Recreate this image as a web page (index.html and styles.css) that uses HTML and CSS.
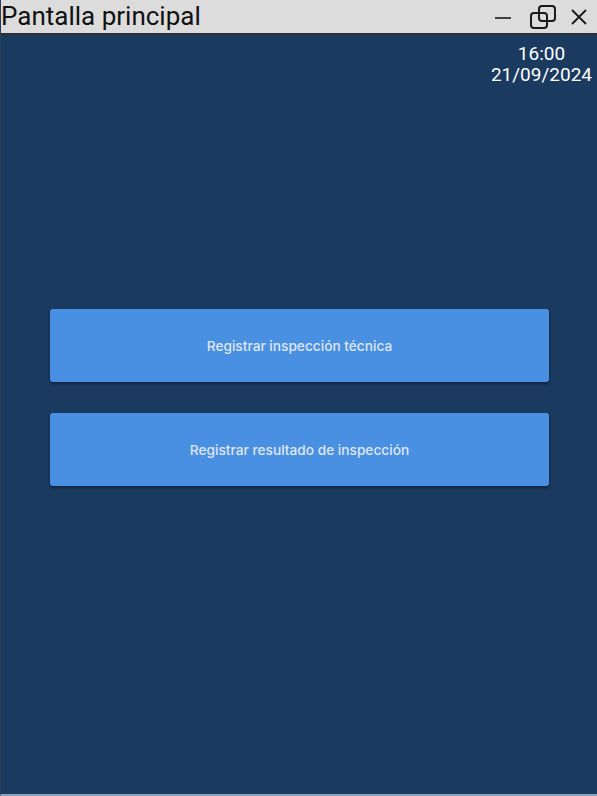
FILE: index.html
```html
<!DOCTYPE html>
<html lang="es">
<head>
<meta charset="utf-8">
<title>Pantalla principal</title>
<link rel="stylesheet" href="styles.css">
</head>
<body>
<div class="window">
  <header class="titlebar">
    <span class="title">Pantalla principal</span>
    <div class="controls">
      <svg class="ctl ctl-min" width="18" height="20" viewBox="0 0 18 20"><path d="M1 11h16" stroke="#1a1a1a" stroke-width="1.6" fill="none"/></svg>
      <svg class="ctl ctl-max" width="28" height="26" viewBox="0 0 28 26"><rect x="10" y="2" width="16" height="15" rx="3" stroke="#1a1a1a" stroke-width="2" fill="none"/><rect x="2" y="9" width="16" height="15" rx="3" stroke="#1a1a1a" stroke-width="2" fill="#dcdcdc"/><path d="M10 9v5a3 3 0 0 0 3 3h5" stroke="#1a1a1a" stroke-width="2" fill="none"/></svg>
      <svg class="ctl ctl-close" width="18" height="20" viewBox="0 0 18 20"><path d="M2 3L16 17M16 3L2 17" stroke="#1a1a1a" stroke-width="1.8" fill="none"/></svg>
    </div>
  </header>
  <main class="content">
    <div class="clock">
      <div>16:00</div>
      <div>21/09/2024</div>
    </div>
    <div class="actions">
      <button class="btn">Registrar inspección técnica</button>
      <button class="btn">Registrar resultado de inspección</button>
    </div>
  </main>
</div>
</body>
</html>
```
FILE: styles.css
```css
html, body {
  margin: 0;
  padding: 0;
  height: 100%;
  background: #1b3a5f;
}
.window {
  display: flex;
  flex-direction: column;
  height: 796px;
  box-sizing: border-box;
  border-bottom: 2px solid #8fa3bd;
  border-left: 1px solid #2a3d55;
}
.titlebar {
  height: 33px;
  background: #dcdcdc;
  border-bottom: 2px solid #2b2f36;
  display: flex;
  align-items: center;
  justify-content: space-between;
  flex-shrink: 0;
}
.title {
  font-family: Roboto, "Liberation Sans", sans-serif;
  font-size: 26px;
  color: #111;
  line-height: 33px;
}
.controls {
  display: flex;
  align-items: center;
  margin-right: 9px;
}
.ctl-min { margin-right: 17px; }
.ctl-max { margin-right: 13px; }
.content {
  flex: 1;
  display: flex;
  flex-direction: column;
}
.clock {
  align-self: flex-end;
  text-align: center;
  font-family: Roboto, "Liberation Sans", sans-serif;
  font-size: 19px;
  line-height: 21px;
  color: #ffffff;
  margin-top: 8px;
  margin-right: 5px;
}
.actions {
  display: flex;
  flex-direction: column;
  gap: 31px;
  margin: 224px 48px 0 49px;
}
.btn {
  height: 73px;
  border: none;
  border-radius: 3px;
  background: #4a90e2;
  color: #dfe6ef;
  font-family: Inter, "Open Sans", sans-serif;
  font-size: 13.7px;
  font-weight: 500;
  box-shadow: 0 2px 3px rgba(0,0,0,0.35);
  padding: 0;
}
```
